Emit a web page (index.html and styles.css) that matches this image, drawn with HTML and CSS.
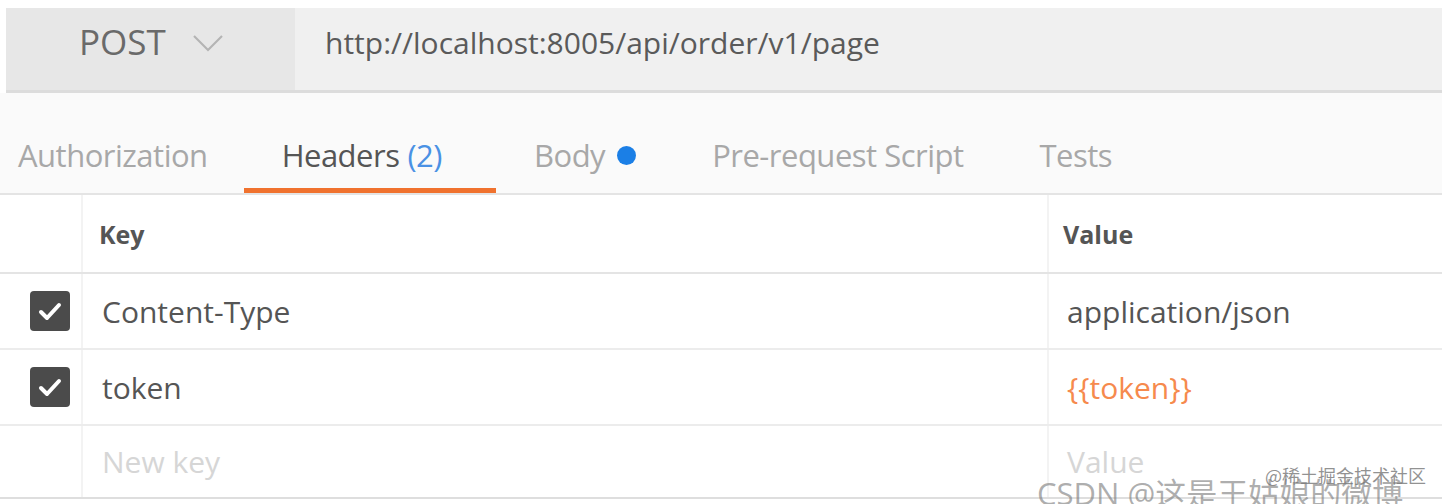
FILE: index.html
```html
<!DOCTYPE html>
<html>
<head>
<meta charset="utf-8">
<link rel="stylesheet" href="styles.css">
</head>
<body>
<div class="page">
  <div class="urlbar">
    <div class="method">
      <span class="method-name">POST</span>
      <svg class="chevron" width="32" height="20" viewBox="0 0 32 20"><polyline points="2,3 16,17 30,3" fill="none" stroke="#b4b4b4" stroke-width="2.2"/></svg>
    </div>
    <div class="url">http://localhost:8005/api/order/v1/page</div>
  </div>
  <div class="tabs">
    <div class="tab">Authorization</div>
    <div class="tab active">Headers <span class="count">(2)</span></div>
    <div class="tab">Body <span class="dot"></span></div>
    <div class="tab">Pre-request Script</div>
    <div class="tab">Tests</div>
  </div>
  <div class="table">
    <div class="row head">
      <div class="c-check"></div>
      <div class="c-key">Key</div>
      <div class="c-val">Value</div>
    </div>
    <div class="row">
      <div class="c-check"><span class="box"><svg width="40" height="40" viewBox="0 0 40 40"><polyline points="11,21 17,27 29,14" fill="none" stroke="#fff" stroke-width="4" stroke-linecap="round" stroke-linejoin="round"/></svg></span></div>
      <div class="c-key">Content-Type</div>
      <div class="c-val">application/json</div>
    </div>
    <div class="row">
      <div class="c-check"><span class="box"><svg width="40" height="40" viewBox="0 0 40 40"><polyline points="11,21 17,27 29,14" fill="none" stroke="#fff" stroke-width="4" stroke-linecap="round" stroke-linejoin="round"/></svg></span></div>
      <div class="c-key">token</div>
      <div class="c-val var">{{token}}</div>
    </div>
    <div class="row last">
      <div class="c-check"></div>
      <div class="c-key placeholder">New key</div>
      <div class="c-val placeholder">Value</div>
    </div>
  </div>
  <div class="wm-small">@稀土掘金技术社区</div>
  <div class="wm-big">CSDN @这是王姑娘的微博</div>
</div>
</body>
</html>
```
FILE: styles.css
```css
html, body {
  margin: 0;
  padding: 0;
}
*, *::before, *::after {
  box-sizing: border-box;
}
body {
  width: 1442px;
  height: 504px;
  overflow: hidden;
  background: #fff;
  font-family: "Open Sans", "Noto Sans", sans-serif;
}
.page {
  position: relative;
  width: 1442px;
  height: 504px;
  padding-top: 8px;
}
.urlbar {
  display: flex;
  height: 85px;
  border-bottom: 3px solid #dcdcdc;
  margin-left: 6px;
}
.method {
  width: 289px;
  background: #e7e7e7;
  display: flex;
  align-items: center;
  padding-left: 73px;
  padding-bottom: 15px;
}
.method-name {
  font-size: 35px;
  color: #6a6a6a;
  letter-spacing: 0;
}
.chevron {
  margin-left: 26px;
  margin-top: 2px;
}
.url {
  flex: 1;
  background: #f0f0f0;
  display: flex;
  align-items: center;
  padding-left: 30px;
  padding-bottom: 14px;
  font-size: 30px;
  color: #5a5a5a;
}
.tabs {
  display: flex;
  align-items: flex-end;
  background: #fafafa;
  height: 102px;
  border-bottom: 2px solid #e4e4e4;
}
.tab {
  line-height: 40px;
  height: 58px;
  padding: 0 38px;
  border-bottom: 5px solid transparent;
  font-size: 31px;
  color: #a8a8a8;
  white-space: nowrap;
  display: flex;
  align-items: flex-start;
  letter-spacing: -0.5px;
}
.tab:first-child {
  margin-left: -20px;
  margin-right: -2px;
}
.tab.active {
  color: #555;
  border-bottom-color: #f0722e;
  padding-right: 54px;
}
.count {
  color: #4a91e4;
  margin-left: 8px;
}
.dot {
  display: inline-block;
  width: 19px;
  height: 19px;
  border-radius: 50%;
  background: #1b7fe6;
  margin-left: 12px;
  margin-top: 11px;
}
.table {
  background: #fff;
}
.row {
  display: flex;
  height: 76px;
  border-bottom: 2px solid #ececec;
}
.row.head {
  height: 79px;
  border-bottom-color: #e4e4e4;
}
.row.last {
  height: 73px;
  border-bottom-color: #dedede;
}
.c-check {
  width: 83px;
  border-right: 2px solid #f3f3f3;
  display: flex;
  align-items: center;
  padding-left: 30px;
}
.box {
  width: 40px;
  height: 40px;
  border-radius: 4px;
  background: #4b4b4b;
  display: block;
}
.box svg {
  display: block;
}
.c-key {
  width: 966px;
  border-right: 2px solid #f3f3f3;
  display: flex;
  align-items: center;
  padding-left: 19px;
  font-size: 30px;
  color: #555;
}
.c-val {
  flex: 1;
  display: flex;
  align-items: center;
  padding-left: 18px;
  font-size: 30px;
  color: #555;
}
.head .c-key, .head .c-val {
  font-size: 25px;
  font-weight: 700;
  color: #555;
  padding-left: 16px;
}
.head .c-val {
  padding-left: 14px;
}
.var {
  color: #f68a4d;
}
.placeholder {
  color: #d6d6d6;
}
.wm-small {
  position: absolute;
  left: 1265px;
  top: 462px;
  font-family: "Noto Sans CJK SC", sans-serif;
  font-size: 18px;
  color: rgba(110, 110, 110, 0.75);
  white-space: nowrap;
}
.wm-big {
  position: absolute;
  left: 1037px;
  top: 471px;
  font-family: "Open Sans", "Noto Sans CJK SC", sans-serif;
  font-size: 31px;
  color: rgba(120, 120, 120, 0.6);
  white-space: nowrap;
  line-height: 44px;
}
```
